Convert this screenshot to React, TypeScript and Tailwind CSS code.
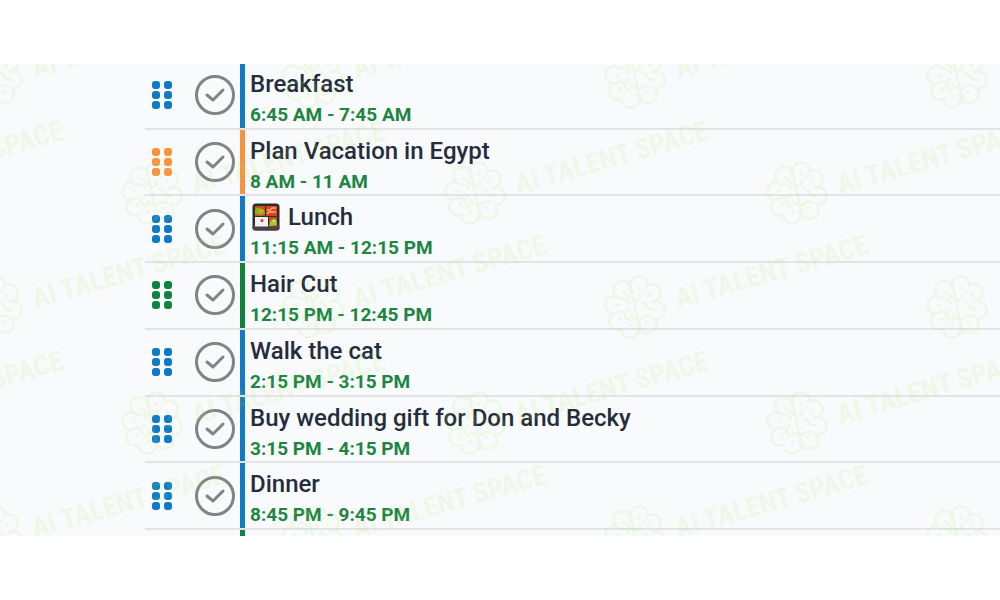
type Tone = "blue" | "orange" | "green";

type Task = {
    title: string;
    time: string;
    tone: Tone;
    bento?: boolean;
};

const tones: Record<Tone, string> = {
    blue: "bg-[#0f7ac5]",
    orange: "bg-[#fb923c]",
    green: "bg-[#0f833d]",
};

const tasks: Task[] = [
    { title: "Breakfast", time: "6:45 AM - 7:45 AM", tone: "blue" },
    { title: "Plan Vacation in Egypt", time: "8 AM - 11 AM", tone: "orange" },
    { title: "Lunch", time: "11:15 AM - 12:15 PM", tone: "blue", bento: true },
    { title: "Hair Cut", time: "12:15 PM - 12:45 PM", tone: "green" },
    { title: "Walk the cat", time: "2:15 PM - 3:15 PM", tone: "blue" },
    { title: "Buy wedding gift for Don and Becky", time: "3:15 PM - 4:15 PM", tone: "blue" },
    { title: "Dinner", time: "8:45 PM - 9:45 PM", tone: "blue" },
];

const BentoIcon = () => (
    <svg viewBox="0 0 28 28" className="ml-0.5 size-7" aria-hidden="true">
        <rect x="0.5" y="0.5" width="27" height="27" rx="3.5" fill="#2d2b2c" />
        <rect x="0.5" y="22" width="27" height="5.5" rx="2.5" fill="#454344" />
        <rect x="3" y="3" width="10" height="10" fill="#c8501e" />
        <rect x="14" y="3" width="11" height="10" fill="#d9421e" />
        <rect x="3" y="14" width="13" height="9.5" fill="#f6f1f1" />
        <rect x="17" y="14" width="8" height="9.5" fill="#c8501e" />
        <path d="M3 6l4-2 2 3 3-1 1 5-4 1-6-1z" fill="#8fae1b" />
        <circle cx="9" cy="8" r="2.2" fill="#d9a514" />
        <path d="M15 7h3l2-2h4M15 11l2-2h7" stroke="#ffab7a" strokeWidth="1.600" fill="none" />
        <circle cx="10" cy="17.500" r="1.500" fill="#e0322b" />
        <path d="M17.500 23c0-4 2-7 4.500-7s3 3 3 6z" fill="#a4c639" />
        <circle cx="22" cy="18" r="1.300" fill="#f4e04d" />
    </svg>
);

const Grip = ({ tone }: { tone: Tone }) => (
    <button type="button" aria-label="Drag task" className="grid cursor-grab grid-cols-2 gap-x-1 gap-y-0.5">
        {[0, 1, 2, 3, 4, 5].map((dot) => (
            <span key={dot} className={`size-2 rounded-[3px] ${tones[tone]}`} />
        ))}
    </button>
);

const TaskRow = ({ task }: { task: Task }) => (
    <li className="flex items-center border-b-2 border-[#e2e4e8] pl-[7px]">
        <Grip tone={task.tone} />
        <label className="relative ml-[23px] size-10 shrink-0">
            <input
                type="checkbox"
                aria-label={`Complete ${task.title}`}
                className="block size-10 appearance-none rounded-full border-3 border-[#838383]"
            />
            <svg viewBox="0 0 40 40" className="pointer-events-none absolute inset-0" fill="none" aria-hidden="true">
                <path d="M12 20l6 5 10-10" stroke="#838383" strokeWidth="3" strokeLinecap="round" strokeLinejoin="round" />
            </svg>
        </label>
        <span className={`ml-[5px] w-[5px] shrink-0 self-stretch ${tones[task.tone]}`} />
        <div className="min-w-0 self-start pt-0.5 pl-[5px]">
            <h2 className="flex items-center gap-2 text-[24px] leading-[38px] font-medium text-[#252d3d]">
                {task.bento && <BentoIcon />}
                {task.title}
            </h2>
            <p className="text-[19px] leading-6 font-bold text-[#1c8542]">{task.time}</p>
        </div>
    </li>
);

// lobes of the brain, as circle centres around the middle of the mark
const lobes = [
    [-13, -17],
    [-21, -2],
    [-17, 14],
    [-5, 22],
    [4, -22],
    [17, -14],
    [21, 3],
    [13, 17],
];

const marks = [
    ...[-8, 313, 635, 957].flatMap((x) => [13, 243, 473].map((y) => [x, y])),
    ...[-170, 152, 475, 797].flatMap((x) => [129, 359].map((y) => [x, y])),
];

const Watermark = () => (
    <svg className="pointer-events-none absolute inset-0 size-full" aria-hidden="true">
        <defs>
            <mask id="outline" maskUnits="userSpaceOnUse" x="-40" y="-40" width="80" height="80">
                {lobes.map(([x, y]) => (
                    <circle key={`${x},${y}`} cx={x} cy={y} r="10" fill="white" />
                ))}
                {lobes.map(([x, y]) => (
                    <circle key={`${x},${y}`} cx={x} cy={y} r="7.500" fill="black" />
                ))}
                <circle r="17" fill="black" />
                <g stroke="white" strokeWidth="2.500" fill="none" strokeLinecap="round">
                    <path d="M-5-26Q-3-12 0 0T5 26M-2-9Q-7-8-8-13M-1-6Q5-7 5-12M-14-9Q-8-8-6-4M-19 6Q-14 3-10 6M11-3Q13 3 19 3M4 13Q9 8 14 9M3 11Q-3 12-4 8M-11 8Q-9 13-5 13" />
                </g>
                {lobes.map(([x, y]) => (
                    <circle key={`${x},${y}`} cx={x * 0.85} cy={y * 0.85} r="1.800" fill="white" />
                ))}
                <circle cx="-8" cy="3" r="1.800" fill="white" />
                <circle cx="8" cy="-4" r="1.800" fill="white" />
            </mask>
        </defs>
        {marks.map(([x, y]) => (
            <g key={`${x},${y}`} transform={`translate(${x} ${y})`} fill="#acec5c" fillOpacity="0.14">
                <rect x="-40" y="-40" width="80" height="80" mask="url(#outline)" />
                {x < 900 && (
                    <text
                        x="41"
                        y="13"
                        transform="rotate(-16)"
                        className="font-['Roboto_Condensed',Roboto,sans-serif] text-[28px] font-bold"
                    >
                        AI TALENT SPACE
                    </text>
                )}
            </g>
        ))}
    </svg>
);

export default function App() {
    return (
        <main className="flex min-h-screen flex-col justify-center bg-white font-[Roboto,sans-serif]">
            <section className="relative overflow-hidden bg-[#f9fafc] pl-[145px]">
                <ul className="-mt-px grid min-h-[467px] auto-rows-fr">
                    {tasks.map((task) => (
                        <TaskRow key={task.title} task={task} />
                    ))}
                </ul>
                {/* top edge of the next task */}
                <div className="flex h-1.5 pl-[95px]">
                    <span className={`w-[5px] ${tones.green}`} />
                </div>
                <Watermark />
            </section>
        </main>
    );
}
